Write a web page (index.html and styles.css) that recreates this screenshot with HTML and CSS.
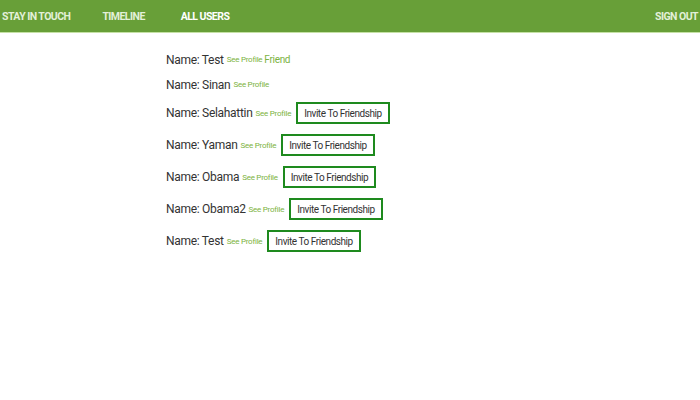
FILE: index.html
```html
<!DOCTYPE html>
<html>
<head>
<meta charset="utf-8">
<link rel="stylesheet" href="styles.css">
</head>
<body>
<nav class="nav">
  <div class="nav-left">
    <a class="nav-item brand">STAY IN TOUCH</a>
    <a class="nav-item">TIMELINE</a>
    <a class="nav-item active">ALL USERS</a>
  </div>
  <a class="nav-item signout">SIGN OUT</a>
</nav>
<main class="users">
  <div class="row"><span class="name">Name: Test</span> <a class="profile">See Profile</a> <span class="friend">Friend</span></div>
  <div class="row"><span class="name">Name: Sinan</span> <a class="profile">See Profile</a></div>
  <div class="row"><span class="name">Name: Selahattin</span> <a class="profile">See Profile</a><button class="invite">Invite To Friendship</button></div>
  <div class="row"><span class="name">Name: Yaman</span> <a class="profile">See Profile</a><button class="invite">Invite To Friendship</button></div>
  <div class="row"><span class="name">Name: Obama</span> <a class="profile">See Profile</a><button class="invite">Invite To Friendship</button></div>
  <div class="row"><span class="name">Name: Obama2</span> <a class="profile">See Profile</a><button class="invite">Invite To Friendship</button></div>
  <div class="row"><span class="name">Name: Test</span> <a class="profile">See Profile</a><button class="invite">Invite To Friendship</button></div>
</main>
</body>
</html>
```
FILE: styles.css
```css
* { box-sizing: border-box; }
body {
  margin: 0;
  font-family: Roboto, "Liberation Sans", sans-serif;
  background: #fff;
}
.nav {
  height: 33px;
  background: #689f38;
  border-bottom: 1px solid #c5e1a5;
  display: flex;
  align-items: center;
  justify-content: space-between;
  padding: 0 2px;
}
.nav-left { display: flex; align-items: center; }
.nav-item {
  font-size: 10.5px;
  font-weight: 700;
  letter-spacing: -0.55px;
  color: #e3f0d8;
  text-decoration: none;
}
.brand { margin-right: 32px; }
.nav-item.active { color: #fff; margin-left: 36px; }
.users {
  padding: 19px 0 0 166px;
  display: flex;
  flex-direction: column;
  align-items: flex-start;
  gap: 10px;
}
.row {
  display: flex;
  align-items: center;
  min-height: 15px;
  color: #333;
}
.name { font-size: 12px; letter-spacing: -0.3px; margin-right: 3px; }
.profile { font-size: 8px; letter-spacing: -0.25px; color: #7cb342; }
.friend { font-size: 10px; letter-spacing: -0.3px; color: #7cb342; margin-left: 2px; }
.invite {
  margin-left: 5px;
  height: 22px;
  padding: 0 6px;
  background: #fff;
  border: 2px solid #1e8a1e;
  font-family: Roboto, "Liberation Sans", sans-serif;
  font-size: 10px;
  letter-spacing: -0.45px;
  color: #333;
}
```
